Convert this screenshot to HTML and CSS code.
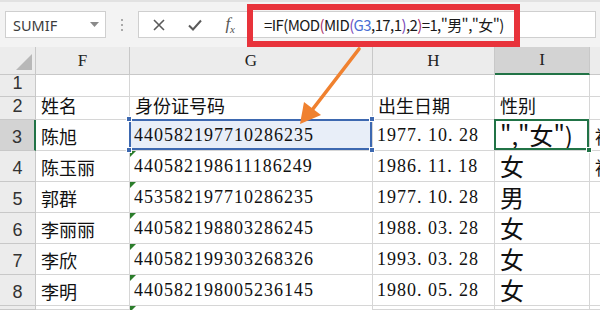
FILE: index.html
```html
<!DOCTYPE html>
<html lang="zh-CN">
<head>
    <meta charset="UTF-8">
    <title>身份证号码判断性别</title>
    <link rel="stylesheet" href="styles.css">
</head>
<body>
    <div class="toolbar">
        <div class="namebox">
            <span>SUMIF</span>
            <svg class="caret" width="9" height="5" viewBox="0 0 9 5"><path d="M0 0h9L4.5 5z" fill="#8a8a8a"/></svg>
        </div>
        <div class="grip"><i></i><i></i><i></i></div>
        <div class="fxbtns">
            <svg width="12" height="12" viewBox="0 0 12 12"><path d="M1 1l10 10M11 1L1 11" stroke="#5a5a5a" stroke-width="1.6" fill="none"/></svg>
            <svg width="14" height="12" viewBox="0 0 14 12"><path d="M1 6.5l4 4L13 1.5" stroke="#5a5a5a" stroke-width="2" fill="none"/></svg>
            <span class="fx"><i>f</i><sub>x</sub></span>
        </div>
        <div class="formula">=IF<span class="p1">(</span>MOD<span class="p2">(</span>MID<span class="p3">(</span><span class="ref">G3</span>,17,1<span class="p3">)</span>,2<span class="p2">)</span>=1,"男","女"<span class="p1">)</span></div>
    </div>

    <div class="sheet">
        <div class="corner"><span></span></div>
        <div class="colhead">F</div>
        <div class="colhead">G</div>
        <div class="colhead">H</div>
        <div class="colhead active">I</div>
        <div class="colhead"></div>

        <div class="rowhead">1</div>
        <div class="cell"></div><div class="cell"></div><div class="cell"></div><div class="cell"></div><div class="cell"></div>

        <div class="rowhead">2</div>
        <div class="cell">姓名</div>
        <div class="cell">身份证号码</div>
        <div class="cell">出生日期</div>
        <div class="cell">性别</div>
        <div class="cell"></div>

        <div class="rowhead active">3</div>
        <div class="cell">陈旭</div>
        <div class="cell num selected">440582197710286235<b class="h tl"></b><b class="h bl"></b><b class="h tr"></b><b class="h br"></b></div>
        <div class="cell num">1977. 10. 28</div>
        <div class="cell sex editing">","女")<b class="h br"></b></div>
        <div class="cell">被</div>

        <div class="rowhead">4</div>
        <div class="cell">陈玉丽</div>
        <div class="cell num flag">440582198611186249</div>
        <div class="cell num">1986. 11. 18</div>
        <div class="cell sex">女</div>
        <div class="cell">被</div>

        <div class="rowhead">5</div>
        <div class="cell">郭群</div>
        <div class="cell num flag">453582197710286235</div>
        <div class="cell num">1977. 10. 28</div>
        <div class="cell sex">男</div>
        <div class="cell"></div>

        <div class="rowhead">6</div>
        <div class="cell">李丽丽</div>
        <div class="cell num flag">440582198803286245</div>
        <div class="cell num">1988. 03. 28</div>
        <div class="cell sex">女</div>
        <div class="cell"></div>

        <div class="rowhead">7</div>
        <div class="cell">李欣</div>
        <div class="cell num flag">440582199303268326</div>
        <div class="cell num">1993. 03. 28</div>
        <div class="cell sex">女</div>
        <div class="cell"></div>

        <div class="rowhead">8</div>
        <div class="cell">李明</div>
        <div class="cell num flag">440582198005236145</div>
        <div class="cell num">1980. 05. 28</div>
        <div class="cell sex">女</div>
        <div class="cell"></div>

        <div class="rowhead"></div>
        <div class="cell"></div>
        <div class="cell num flag"></div>
        <div class="cell"></div>
        <div class="cell"></div>
        <div class="cell"></div>
    </div>

    <!-- annotation: red box round the formula and the arrow to G3 -->
    <div class="callout"></div>
    <svg class="arrow" width="600" height="310" viewBox="0 0 600 310">
        <path d="M359 49L309 114" stroke="#f0812f" stroke-width="3.6" stroke-linecap="round" fill="none"/>
        <path d="M300 124L304 102L321 115z" fill="#f0812f"/>
    </svg>
</body>
</html>
```

FILE: styles.css
```css
* {
    margin: 0;
    padding: 0;
    box-sizing: border-box;
}
body {
    width: 600px;
    height: 310px;
    overflow: hidden;
    background: #fff;
    font-family: "Noto Sans CJK SC", sans-serif;
    color: #111;
}

/* toolbar */
.toolbar {
    height: 47px;
    display: flex;
    align-items: center;
    padding-left: 5px;
    background: #f3f3f3;
    border-top: 2px solid #e2e2e2;
}
.namebox {
    width: 101px;
    height: 27px;
    display: flex;
    align-items: center;
    justify-content: space-between;
    padding: 0 6px 0 7px;
    background: #fff;
    border: 1px solid #cfcfcf;
    font-family: "Noto Sans", sans-serif;
    font-size: 14.5px;
    color: #3c3c3c;
}
.grip {
    width: 32px;
    display: flex;
    flex-direction: column;
    align-items: center;
    gap: 3px;
}
.grip i {
    width: 2px;
    height: 2px;
    background: #a9a9a9;
}
.fxbtns {
    width: 111px;
    height: 27px;
    display: flex;
    align-items: center;
    justify-content: space-between;
    padding: 0 13px 0 14px;
    background: #fff;
    border: 1px solid #cfcfcf;
}
.fx {
    font-family: "Liberation Serif", serif;
    font-size: 17px;
    color: #555;
}
.fx sub {
    font-size: 11px;
    font-style: italic;
}
.formula {
    flex: 1;
    height: 27px;
    margin-right: 4px;
    display: flex;
    align-items: center;
    padding-left: 14px;
    background: #fff;
    border: 1px solid #cfcfcf;
    font-size: 15px;
    letter-spacing: -0.6px;
    color: #1a1a1a;
    white-space: nowrap;
}
.p2 { color: #a8326b; }
.p3 { color: #7b48b8; }
.ref { color: #4a6fd4; }

/* sheet */
.sheet {
    display: grid;
    grid-template-columns: 36px 94px 243px 122px 95px 40px;
    grid-template-rows: 28px 22px 23px repeat(6, 31px) 4px;
    overflow: hidden;
}
.corner, .colhead, .rowhead {
    background: #ececec;
    border-right: 1px solid #c8c8c8;
    border-bottom: 1px solid #c8c8c8;
}
.corner {
    position: relative;
}
.corner span {
    position: absolute;
    right: 3px;
    bottom: 4px;
    border-left: 16px solid transparent;
    border-bottom: 16px solid #b8b8b8;
}
.colhead {
    display: flex;
    align-items: center;
    justify-content: center;
    font-family: "Liberation Serif", serif;
    font-size: 17px;
    color: #222;
}
.colhead.active {
    background: #d3d3d3;
    border-bottom: 2px solid #217346;
}
.rowhead {
    display: flex;
    align-items: flex-end;
    justify-content: center;
    padding-bottom: 2px;
    font-family: "Liberation Sans", sans-serif;
    font-size: 18px;
    color: #333;
}
.rowhead.active {
    background: #d3d3d3;
    border-right: 2px solid #217346;
}
.cell {
    position: relative;
    display: flex;
    align-items: flex-end;
    padding: 0 0 3px 5px;
    border-right: 1px solid #d6d6d6;
    border-bottom: 1px solid #d6d6d6;
    font-size: 18px;
    line-height: 22px;
    white-space: nowrap;
}
.cell.num {
    font-family: "Liberation Serif", serif;
    font-size: 18px;
    letter-spacing: 1px;
    padding-left: 4px;
    padding-bottom: 4px;
}
.cell.sex {
    font-size: 24px;
    line-height: 24px;
    padding-bottom: 3px;
}
.cell.flag::before {
    content: "";
    position: absolute;
    left: 0;
    top: 0;
    border-top: 6px solid #2b7d2b;
    border-right: 6px solid transparent;
}
.cell.selected {
    background: #e8eef8;
}
.cell.selected::after {
    content: "";
    position: absolute;
    left: -1px;
    top: -1px;
    right: 0;
    bottom: 0;
    border: 2px solid #3d68b0;
}
.cell.editing::after {
    content: "";
    position: absolute;
    left: -1px;
    top: -1px;
    right: 0;
    bottom: 0;
    border: 2px solid #217346;
}
.h {
    position: absolute;
    width: 6px;
    height: 6px;
    background: #3d68b0;
    border: 1px solid #fff;
    z-index: 2;
}
.editing .h {
    background: #217346;
}
.tl { left: -4px; top: -4px; }
.bl { left: -4px; bottom: -3px; }
.tr { right: -3px; top: -4px; }
.br { right: -3px; bottom: -3px; }

/* annotation */
.callout {
    position: absolute;
    left: 247px;
    top: 4px;
    width: 273px;
    height: 43px;
    border: 6px solid #e8333b;
}
.arrow {
    position: absolute;
    left: 0;
    top: 0;
    pointer-events: none;
}
```
